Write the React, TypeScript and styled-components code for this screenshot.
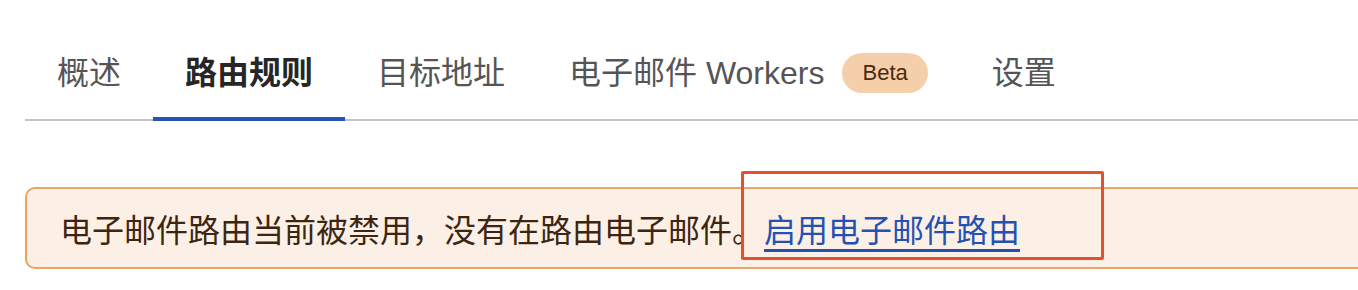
import React from 'react';
import styled, { createGlobalStyle } from 'styled-components';

const GlobalStyle = createGlobalStyle`
  html, body {
    margin: 0;
    padding: 0;
    background: #ffffff;
    overflow: hidden;
  }
  body {
    font-family: 'Liberation Sans', 'Noto Sans CJK SC', sans-serif;
  }
`;

const Page = styled.div`
  padding: 49px 0 0 25px;
`;

const TabList = styled.nav`
  display: flex;
  align-items: flex-end;
  border-bottom: 2px solid #c4c4c4;
`;

const Tab = styled.div<{ active?: boolean }>`
  display: flex;
  align-items: center;
  padding: 0 32px 20px;
  margin-bottom: -2px;
  font-size: 32px;
  line-height: 48px;
  font-weight: ${props => (props.active ? 600 : 400)};
  color: ${props => (props.active ? '#262626' : '#555555')};
  border-bottom: 4px solid ${props => (props.active ? '#2554b4' : 'transparent')};
  white-space: nowrap;
  cursor: pointer;
`;

const Badge = styled.span`
  display: inline-flex;
  align-items: center;
  justify-content: center;
  margin-left: 18px;
  height: 40px;
  padding: 0 20px;
  border-radius: 20px;
  background: #f5cfaa;
  color: #4a2a10;
  font-size: 22px;
  line-height: 1;
`;

const Alert = styled.div`
  position: relative;
  margin: 66px -24px 0 0;
  padding: 15px 33px;
  border: 2px solid #e9a466;
  border-radius: 10px;
  background: #fcf0e6;
  color: #3d2611;
  font-size: 32px;
  line-height: 48px;
  font-family: 'Noto Sans CJK SC', sans-serif;
  white-space: nowrap;
`;

const AlertLink = styled.a`
  color: #2452b2;
  text-decoration: underline;
  text-decoration-thickness: 3px;
  text-underline-offset: 7px;
  cursor: pointer;
`;

const Highlight = styled.div`
  position: absolute;
  left: 714px;
  top: -18px;
  width: 363px;
  height: 89px;
  box-sizing: border-box;
  border: 3px solid #e4502c;
  border-radius: 2px;
  pointer-events: none;
`;

const tabs = ['概述', '路由规则', '目标地址'];

const App: React.FC = () => {
  return (
    <>
      <GlobalStyle />
      <Page>
        <TabList>
          {tabs.map(label => (
            <Tab key={label} active={label === '路由规则'}>
              {label}
            </Tab>
          ))}
          <Tab>
            电子邮件 Workers
            <Badge>Beta</Badge>
          </Tab>
          <Tab>设置</Tab>
        </TabList>

        <Alert>
          电子邮件路由当前被禁用，没有在路由电子邮件。
          <AlertLink>启用电子邮件路由</AlertLink>
          <Highlight />
        </Alert>
      </Page>
    </>
  );
};

export default App;
